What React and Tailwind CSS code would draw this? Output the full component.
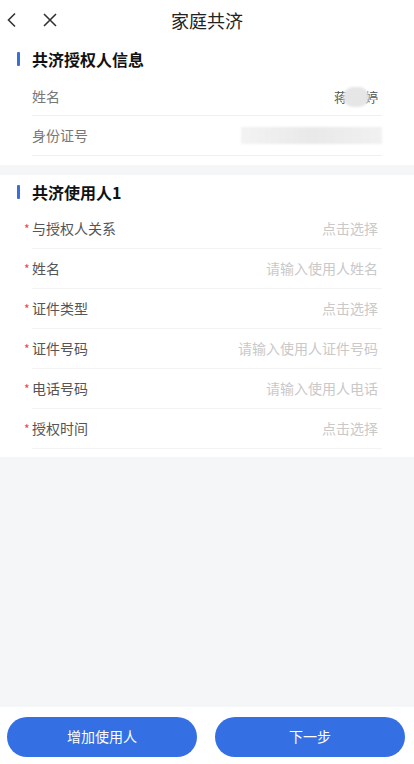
import React from "react";

const font = { fontFamily: '"Noto Sans CJK SC", "Noto Sans", sans-serif' };

const userRows = [
  { label: "与授权人关系", hint: "点击选择" },
  { label: "姓名", hint: "请输入使用人姓名" },
  { label: "证件类型", hint: "点击选择" },
  { label: "证件号码", hint: "请输入使用人证件号码" },
  { label: "电话号码", hint: "请输入使用人电话" },
  { label: "授权时间", hint: "点击选择" },
];

function SectionTitle({ children, h }) {
  return (
    <div className={`flex items-center pl-[17px] ${h}`}>
      <span className="w-[3px] h-[14px] bg-[#3a6fd8] rounded-[1px]" />
      <span className="ml-[12px] text-[16px] font-bold text-[#111] leading-none">{children}</span>
    </div>
  );
}

function App() {
  return (
    <div style={font} className="w-[414px] h-[764px] flex flex-col bg-[#f5f6f8] overflow-hidden">
      <header className="h-[40px] bg-white flex items-center relative shrink-0">
        <svg className="absolute left-[5px] top-[12px]" width="14" height="16" viewBox="0 0 14 16" fill="none" stroke="#333" strokeWidth="1.6">
          <path d="M10 1.5 L3.5 8 L10 14.5" />
        </svg>
        <svg className="absolute left-[42px] top-[12px]" width="16" height="16" viewBox="0 0 16 16" fill="none" stroke="#333" strokeWidth="1.6">
          <path d="M2 2 L14 14 M14 2 L2 14" />
        </svg>
        <h1 className="w-full text-center text-[18px] text-[#222]">家庭共济</h1>
      </header>

      <section className="bg-white pb-[9px]">
        <SectionTitle h="h-[38px]">共济授权人信息</SectionTitle>
        <div className="px-[32px]">
          <div className="flex items-center justify-between h-[38px] border-b border-[#f0f0f0]">
            <span className="text-[14px] text-[#777]">姓名</span>
            <span className="flex items-center text-[13px] text-[#555] pr-[4px]">
              蒋
              <span className="w-[26px] h-[20px] rounded-full bg-[#e6e6e6] -mx-[4px] blur-[1px]" />
              婷
            </span>
          </div>
          <div className="flex items-center justify-between h-[40px] border-b border-[#f0f0f0]">
            <span className="text-[14px] text-[#777]">身份证号</span>
            <span className="w-[141px] h-[17px] bg-gradient-to-r from-[#f3f3f3] via-[#e9e9e9] to-[#f1f1f1] blur-[1px]" />
          </div>
        </div>
      </section>

      <section className="bg-white mt-[10px] pb-[8px]">
        <SectionTitle h="h-[34px]">共济使用人1</SectionTitle>
        <div className="pl-[24px] pr-[32px]">
          {userRows.map((r) => (
            <div key={r.label} className="flex items-center justify-between h-[40px] ml-[8px] border-b border-[#f3f3f3] relative">
              <span className="text-[14px] text-[#555] flex items-center">
                <span className="absolute -left-[8px] text-[#e0474f] text-[12px]">*</span>
                {r.label}
              </span>
              <span className="text-[14px] text-[#c9c9c9] pr-[4px]">{r.hint}</span>
            </div>
          ))}
        </div>
      </section>

      <div className="flex-1" />

      <footer className="bg-white h-[57px] shrink-0 flex items-center gap-[18px] px-[7px] pt-[2px]">
        <button className="w-[190px] h-[40px] rounded-full bg-[#3470e4] text-white text-[14px]">增加使用人</button>
        <button className="w-[190px] h-[40px] rounded-full bg-[#3470e4] text-white text-[14px]">下一步</button>
      </footer>
    </div>
  );
}

export default App;
